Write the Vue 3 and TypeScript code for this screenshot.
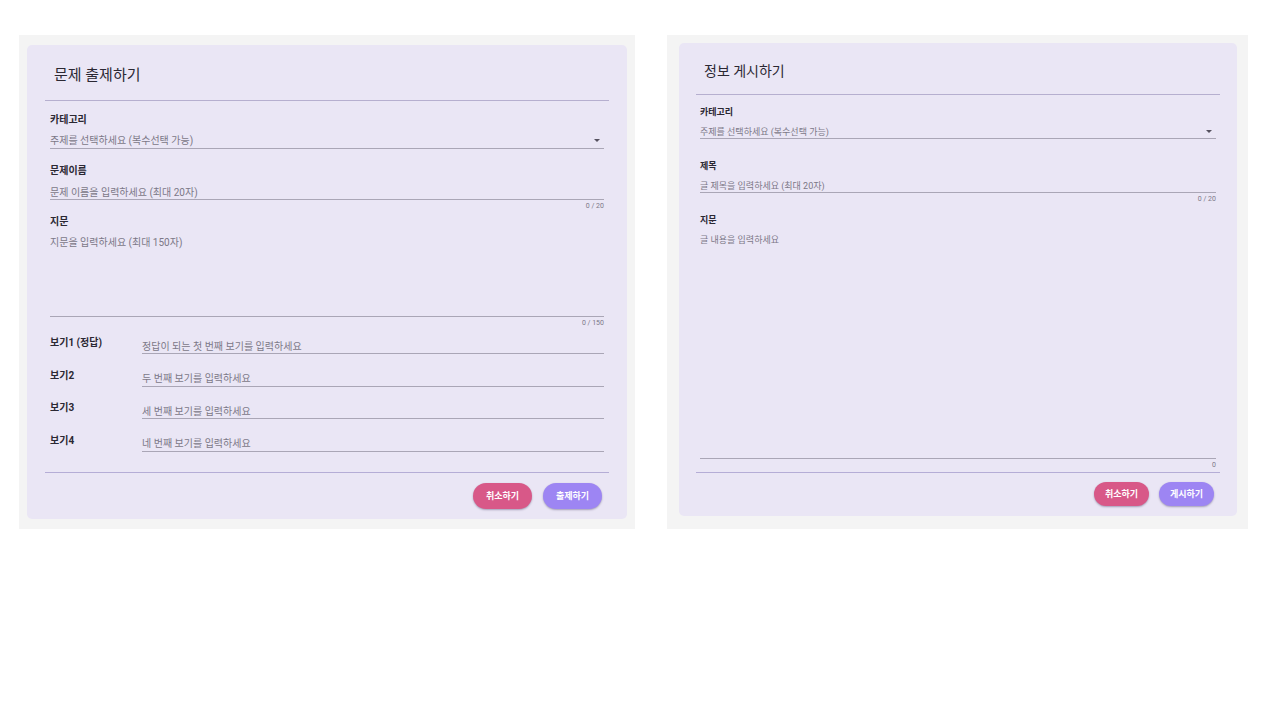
<script setup lang="ts">
import { reactive } from 'vue'

interface Choice {
  id: string
  label: string
  placeholder: string
  value: string
}

const quiz = reactive({ category: '', name: '', passage: '' })
const post = reactive({ category: '', title: '', body: '' })

const choices = reactive<Choice[]>([
  { id: 'choice-1', label: '보기1 (정답)', placeholder: '정답이 되는 첫 번째 보기를 입력하세요', value: '' },
  { id: 'choice-2', label: '보기2', placeholder: '두 번째 보기를 입력하세요', value: '' },
  { id: 'choice-3', label: '보기3', placeholder: '세 번째 보기를 입력하세요', value: '' },
  { id: 'choice-4', label: '보기4', placeholder: '네 번째 보기를 입력하세요', value: '' },
])
</script>

<template>
  <main class="page">
    <section class="panel quiz">
      <form class="card" @submit.prevent>
        <h1 class="title">문제 출제하기</h1>
        <div class="fields">
          <div class="field">
            <label class="label" for="quiz-category">카테고리</label>
            <div class="select-wrap">
              <select id="quiz-category" v-model="quiz.category" class="control">
                <option value="">주제를 선택하세요 (복수선택 가능)</option>
              </select>
              <svg class="arrow" viewBox="0 0 6 3" aria-hidden="true"><path d="M0 0h6L3 3z" /></svg>
            </div>
            <div class="foot"></div>
          </div>
          <div class="field">
            <label class="label" for="quiz-name">문제이름</label>
            <input id="quiz-name" v-model="quiz.name" class="control" type="text" maxlength="20" placeholder="문제 이름을 입력하세요 (최대 20자)" />
            <div class="foot">{{ quiz.name.length }} / 20</div>
          </div>
          <div class="field">
            <label class="label" for="quiz-passage">지문</label>
            <textarea id="quiz-passage" v-model="quiz.passage" class="control area" maxlength="150" placeholder="지문을 입력하세요 (최대 150자)"></textarea>
            <div class="foot">{{ quiz.passage.length }} / 150</div>
          </div>
          <div class="choices">
            <div v-for="c in choices" :key="c.id" class="choice">
              <label class="label" :for="c.id">{{ c.label }}</label>
              <input :id="c.id" v-model="c.value" class="control" type="text" :placeholder="c.placeholder" />
            </div>
          </div>
        </div>
        <div class="actions">
          <button type="button" class="btn cancel">취소하기</button>
          <button type="submit" class="btn submit">출제하기</button>
        </div>
      </form>
    </section>

    <section class="panel post">
      <form class="card" @submit.prevent>
        <h1 class="title">정보 게시하기</h1>
        <div class="fields">
          <div class="field">
            <label class="label" for="post-category">카테고리</label>
            <div class="select-wrap">
              <select id="post-category" v-model="post.category" class="control">
                <option value="">주제를 선택하세요 (복수선택 가능)</option>
              </select>
              <svg class="arrow" viewBox="0 0 6 3" aria-hidden="true"><path d="M0 0h6L3 3z" /></svg>
            </div>
            <div class="foot"></div>
          </div>
          <div class="field">
            <label class="label" for="post-title">제목</label>
            <input id="post-title" v-model="post.title" class="control" type="text" maxlength="20" placeholder="글 제목을 입력하세요 (최대 20자)" />
            <div class="foot">{{ post.title.length }} / 20</div>
          </div>
          <div class="field">
            <label class="label" for="post-body">지문</label>
            <textarea id="post-body" v-model="post.body" class="control area" placeholder="글 내용을 입력하세요"></textarea>
            <div class="foot last">{{ post.body.length }}</div>
          </div>
        </div>
        <div class="actions">
          <button type="button" class="btn cancel">취소하기</button>
          <button type="submit" class="btn submit">게시하기</button>
        </div>
      </form>
    </section>
  </main>
</template>

<style>
body {
  background: #fff;
}
</style>

<style scoped>
* {
  box-sizing: border-box;
}
.page {
  display: grid;
  grid-template-columns: 616fr 581fr;
  gap: 32px;
  padding: 35px 32px 35px 19px;
  font-family: Roboto, "Noto Sans CJK KR", sans-serif;
  color: #2b2833;
}
.panel {
  background: #f4f4f4;
  min-width: 0;
}
.quiz {
  --text: 10px;
  --label-h: 18px;
  --label-gap: 4px;
  --control-h: 16px;
  --foot-h: 13px;
  --area-h: 82px;
  padding: 10px 8px;
}
.post {
  --text: 9px;
  --label-h: 17px;
  --label-gap: 3px;
  --control-h: 15px;
  --foot-h: 19px;
  --area-h: 227px;
  padding: 8px 11px 13px 12px;
}
.card {
  background: #eae6f5;
  border-radius: 5px;
}
.quiz .card {
  padding: 0 18px 10px;
}
.post .card {
  padding: 0 17px 10px;
}
.title {
  margin: 0;
  padding: 5px 9px 0;
  border-bottom: 1px solid #b6afcf;
  font-weight: 400;
}
.quiz .title {
  font-size: 15px;
  line-height: 50px;
}
.post .title {
  padding-left: 8px;
  font-size: 14px;
  line-height: 46px;
}
.quiz .fields {
  padding: 10px 5px 12px;
}
.post .fields {
  padding: 9px 4px 0;
}
.field {
  display: flex;
  flex-direction: column;
}
.label {
  height: var(--label-h);
  line-height: var(--label-h);
  font-size: var(--text);
  font-weight: 700;
}
.field > .label {
  margin-bottom: var(--label-gap);
}
.control {
  display: block;
  width: 100%;
  height: var(--control-h);
  margin: 0;
  padding: 1px 0 0;
  border: 0;
  border-bottom: 1px solid #aaa6b6;
  border-radius: 0;
  outline: none;
  appearance: none;
  background: transparent;
  color: #7c7887;
  font-family: inherit;
  font-size: var(--text);
  line-height: 14px;
}
.control::placeholder {
  color: #7c7887;
  opacity: 1;
}
.area {
  height: var(--area-h);
  resize: none;
}
.select-wrap {
  position: relative;
}
.arrow {
  position: absolute;
  right: 4px;
  top: 6px;
  width: 6px;
  height: 3px;
  fill: #55515f;
  pointer-events: none;
}
.foot {
  height: var(--foot-h);
  font-size: 7px;
  line-height: 12px;
  text-align: right;
  color: #7c7887;
}
.foot.last {
  height: 13px;
}
.choices {
  display: grid;
  grid-template-rows: repeat(4, 1fr);
  height: 130px;
}
.choice {
  display: grid;
  grid-template-columns: 92px 1fr;
  align-items: start;
  padding-top: 4px;
}
.choice .control {
  margin-top: 4px;
}
.actions {
  display: flex;
  justify-content: flex-end;
  border-top: 1px solid #b5add6;
}
.quiz .actions {
  gap: 11px;
  padding: 10px 7px 0;
}
.post .actions {
  gap: 10px;
  padding: 9px 6px 0;
}
.btn {
  padding: 0;
  border: 0;
  border-radius: 13px;
  color: #fff;
  font-family: inherit;
  font-size: 9px;
  font-weight: 700;
  line-height: 12px;
  box-shadow: 0 1px 2px rgba(60, 50, 90, 0.4);
}
.quiz .btn {
  width: 59px;
  height: 26px;
}
.post .btn {
  width: 55px;
  height: 24px;
}
.cancel {
  background: #d85888;
}
.submit {
  background: #9d85f3;
}
</style>
